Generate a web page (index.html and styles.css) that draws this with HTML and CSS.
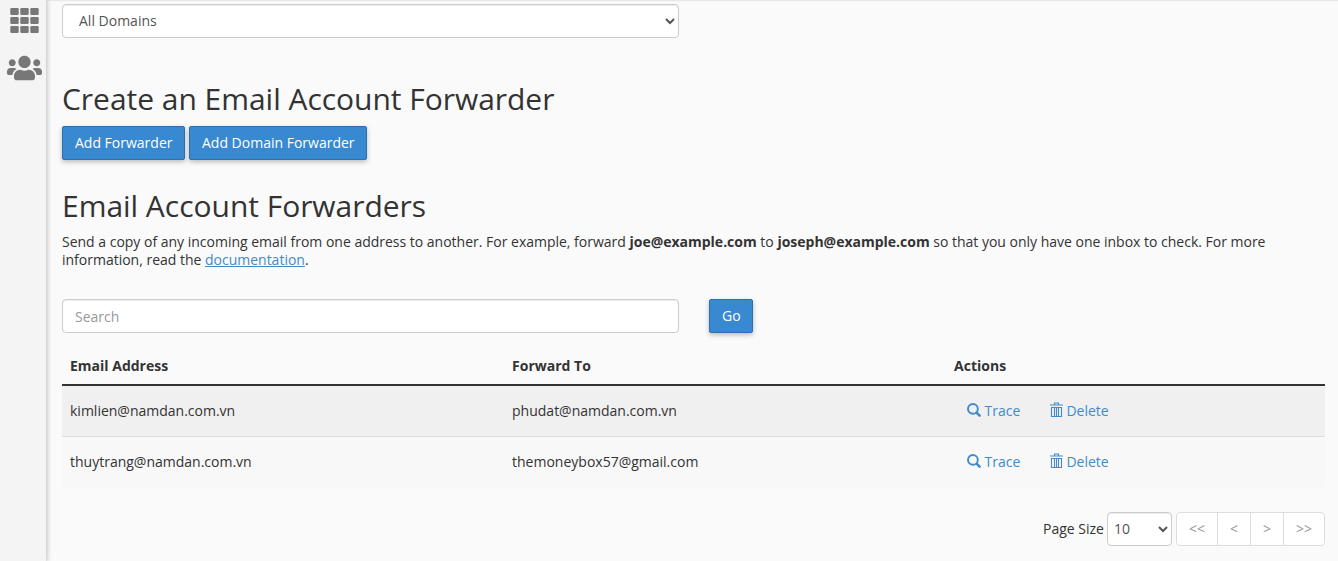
FILE: index.html
```html
<!DOCTYPE html>
<html lang="en">
  <head>
    <meta charset="UTF-8" />
    <meta name="viewport" content="width=device-width, initial-scale=1.0" />
    <title>Forwarders</title>
    <link rel="stylesheet" href="styles.css">
  </head>
  <body>
    <svg class="sprite" aria-hidden="true">
      <symbol id="search" viewBox="0 0 14 14">
        <circle cx="5.9" cy="5.9" r="4.9" fill="none" stroke="currentColor" stroke-width="1.9" />
        <path d="M9.600 9.600l3 3" stroke="currentColor" stroke-width="2.6" stroke-linecap="round" />
      </symbol>
      <symbol id="trash" viewBox="0 0 13 16">
        <path d="M4.500 2.500v-1.500h4v1.500M0 3h13M1.500 5.500h10v9h-10zM4.500 5.500v9M6.500 5.500v9M8.500 5.500v9" fill="none" stroke="currentColor" stroke-width="1.1" />
      </symbol>
    </svg>

    <div class="page">
      <nav class="sidebar">
        <a href="#" aria-label="Tools">
          <svg class="icon-grid" viewBox="0 0 29 25" fill="currentColor">
            <rect x="0.3" y="0" width="8.400" height="7" rx="1.300" />
            <rect x="10.300" y="0" width="8.400" height="7" rx="1.300" />
            <rect x="20.300" y="0" width="8.400" height="7" rx="1.300" />
            <rect x="0.3" y="9" width="8.400" height="7" rx="1.300" />
            <rect x="10.300" y="9" width="8.400" height="7" rx="1.300" />
            <rect x="20.300" y="9" width="8.400" height="7" rx="1.300" />
            <rect x="0.3" y="18" width="8.400" height="7" rx="1.300" />
            <rect x="10.300" y="18" width="8.400" height="7" rx="1.300" />
            <rect x="20.300" y="18" width="8.400" height="7" rx="1.300" />
          </svg>
        </a>
        <a href="#" aria-label="Users">
          <svg class="icon-users" viewBox="0 0 640 512" fill="currentColor">
            <path d="M96 224c35.3 0 64-28.700 64-64s-28.700-64-64-64-64 28.700-64 64 28.700 64 64 64zm448 0c35.300 0 64-28.700 64-64s-28.700-64-64-64-64 28.700-64 64 28.700 64 64 64zm32 32h-64c-17.600 0-33.500 7.100-45.100 18.600 40.300 22.100 68.900 62 75.100 109.400h66c17.700 0 32-14.300 32-32v-32c0-35.300-28.700-64-64-64zm-256 0c61.900 0 112-50.100 112-112S381.900 32 320 32 208 82.100 208 144s50.100 112 112 112zm76.800 32h-8.300c-20.800 10-43.900 16-68.500 16s-47.600-6-68.500-16h-8.300C179.600 288 128 339.600 128 403.200V432c0 26.500 21.500 48 48 48h288c26.500 0 48-21.500 48-48v-28.800c0-63.600-51.600-115.200-115.200-115.200zm-223.700-13.400C161.500 263.100 145.600 256 128 256H64c-35.300 0-64 28.700-64 64v32c0 17.700 14.300 32 32 32h65.900c6.300-47.400 34.900-87.300 75.200-109.400z" />
          </svg>
        </a>
      </nav>

      <main class="content">
        <select class="form-control">
          <option>All Domains</option>
        </select>

        <h2>Create an Email Account Forwarder</h2>
        <div class="buttons">
          <button class="btn">Add Forwarder</button>
          <button class="btn">Add Domain Forwarder</button>
        </div>

        <h2>Email Account Forwarders</h2>
        <p>
          Send a copy of any incoming email from one address to another. For
          example, forward <strong>joe@example.com</strong> to
          <strong>joseph@example.com</strong> so that you only have one inbox to
          check. For more information, read the <a href="#">documentation</a>.
        </p>

        <div class="search">
          <input class="form-control" type="text" placeholder="Search" />
          <button class="btn">Go</button>
        </div>

        <table>
          <thead>
            <tr>
              <th>Email Address</th>
              <th>Forward To</th>
              <th class="col-actions">Actions</th>
            </tr>
          </thead>
          <tbody>
            <tr>
              <td>kimlien@namdan.com.vn</td>
              <td>phudat@namdan.com.vn</td>
              <td>
                <div class="actions">
                  <a href="#"><svg class="icon-search"><use href="#search" /></svg>Trace</a>
                  <a href="#"><svg class="icon-trash"><use href="#trash" /></svg>Delete</a>
                </div>
              </td>
            </tr>
            <tr>
              <td>thuytrang@namdan.com.vn</td>
              <td>themoneybox57@gmail.com</td>
              <td>
                <div class="actions">
                  <a href="#"><svg class="icon-search"><use href="#search" /></svg>Trace</a>
                  <a href="#"><svg class="icon-trash"><use href="#trash" /></svg>Delete</a>
                </div>
              </td>
            </tr>
          </tbody>
        </table>

        <div class="paging">
          <label for="pageSize">Page Size</label>
          <select class="form-control page-size" id="pageSize">
            <option>10</option>
          </select>
          <div class="pagination">
            <span>&lt;&lt;</span>
            <span>&lt;</span>
            <span>&gt;</span>
            <span>&gt;&gt;</span>
          </div>
        </div>
      </main>
    </div>
  </body>
</html>
```

FILE: styles.css
```css
* {
  box-sizing: border-box;
}
body {
  margin: 0;
  background-color: #fafafa;
  color: #333333;
  font-family: "Open Sans", sans-serif;
  font-size: 14px;
  line-height: 18px;
  overflow: hidden;
}
.sprite {
  display: none;
}
.page {
  display: flex;
  height: 561px;
  box-shadow: inset 0 2px 1px -1px #e6e6e6;
}
.sidebar {
  display: flex;
  flex-direction: column;
  align-items: flex-end;
  width: 46px;
  padding: 8px 4px 0 0;
  background-color: #f4f4f4;
  box-shadow: 0 0 5px 1px rgba(0, 0, 0, 0.25);
}
.sidebar a {
  color: #777777;
}
.sidebar svg {
  display: block;
}
.icon-grid {
  width: 29px;
  height: 25px;
  margin: 0 3px 21px 0;
}
.icon-users {
  width: 35px;
  height: 28px;
}
.content {
  flex: 1;
  padding: 4px 13px 0 16px;
}
h2 {
  margin: 0;
  font-size: 30px;
  font-weight: 400;
  letter-spacing: -0.03px;
  line-height: 38px;
}
p {
  margin: 8px 0 30px;
  letter-spacing: -0.007px;
}
a {
  color: #428bca;
}
.form-control {
  display: block;
  width: 617px;
  height: 34px;
  padding: 6px 12px;
  border: 1px solid #cccccc;
  border-radius: 4px;
  background-color: #ffffff;
  box-shadow: inset 0 1px 1px rgba(0, 0, 0, 0.075);
  color: #555555;
  font: inherit;
}
select.form-control {
  padding-top: 5px;
  padding-bottom: 7px;
}
.form-control::placeholder {
  color: #999999;
}
.content > select {
  margin-bottom: 42px;
}
.buttons {
  display: flex;
  gap: 4px;
  margin: 8px 0 27px;
}
.btn {
  height: 34px;
  padding: 0 11.5px 0 12px;
  border: 1px solid #2a70b3;
  border-radius: 2px;
  background-color: #3889d0;
  box-shadow: 0 2px 5px rgba(0, 0, 0, 0.26);
  color: #ffffff;
  font: inherit;
}
.search {
  display: flex;
  gap: 30px;
}
table {
  width: 100%;
  margin-top: 16px;
  border-collapse: separate;
  border-spacing: 0;
  table-layout: fixed;
}
th {
  width: 35%;
  height: 37px;
  padding: 0 8px 2px;
  border-bottom: 2px solid #333333;
  text-align: left;
}
.col-actions {
  width: 30%;
}
td {
  height: 50px;
  padding: 0 8px;
  background-color: #f0f0f0;
}
tr + tr td {
  height: 51px;
  border-top: 1px solid #dddddd;
  background-color: #f8f8f8;
}
.actions {
  display: flex;
  gap: 30px;
  padding-left: 13px;
}
.actions a {
  display: flex;
  text-decoration: none;
}
.icon-search {
  width: 14px;
  height: 14px;
  margin: 1px 3.5px 0 0;
}
.icon-trash {
  width: 13px;
  height: 16px;
  margin: 0 3px 0 0;
}
.paging {
  display: flex;
  justify-content: flex-end;
  align-items: center;
  margin-top: 25px;
}
.page-size {
  width: 65px;
  margin: 0 4px 0 3px;
  padding-left: 2px;
  padding-right: 3px;
}
.pagination {
  display: flex;
  height: 34px;
  border: 1px solid #dddddd;
  border-radius: 4px;
  background-color: #ffffff;
  color: #999999;
  line-height: 32px;
}
.pagination span {
  padding: 0 12px;
}
.pagination span + span {
  border-left: 1px solid #dddddd;
}
```
